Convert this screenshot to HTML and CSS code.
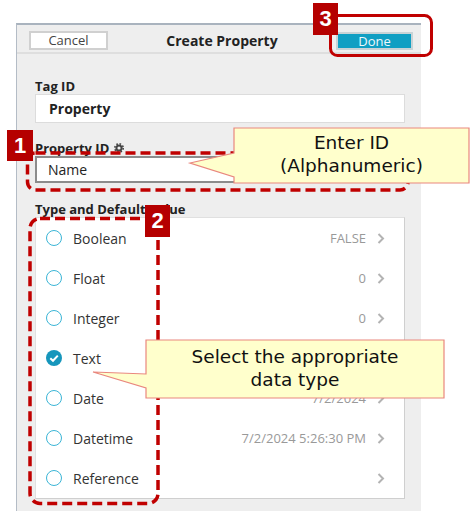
FILE: index.html
```html
<!DOCTYPE html>
<html>
<head>
<meta charset="utf-8">
<link rel="stylesheet" href="styles.css">
</head>
<body>
<div class="app">
  <header class="bar">
    <button class="btn cancel">Cancel</button>
    <div class="title">Create Property</div>
    <button class="btn done">Done</button>
  </header>
  <main class="form">
    <div class="field">
      <div class="label">Tag ID</div>
      <div class="input tag">Property</div>
    </div>
    <div class="field">
      <div class="label">Property ID
        <svg class="gear" width="10" height="10" viewBox="0 0 10 10"><circle cx="5" cy="5" r="2.6" fill="none" stroke="#444" stroke-width="2"/><circle cx="5" cy="5" r="4.2" fill="none" stroke="#444" stroke-width="1.6" stroke-dasharray="1.65 1.65"/></svg>
      </div>
      <div class="input focus">Name</div>
    </div>
    <div class="field types">
      <div class="label">Type and Default Value</div>
      <ul class="list">
        <li class="row"><span class="radio"></span><span class="name">Boolean</span><span class="val">FALSE</span><svg class="chev" width="8" height="11" viewBox="0 0 8 11"><polyline points="1.5,1 6,5.5 1.5,10" fill="none" stroke="#b3b3b3" stroke-width="2"/></svg></li>
        <li class="row"><span class="radio"></span><span class="name">Float</span><span class="val">0</span><svg class="chev" width="8" height="11" viewBox="0 0 8 11"><polyline points="1.5,1 6,5.5 1.5,10" fill="none" stroke="#b3b3b3" stroke-width="2"/></svg></li>
        <li class="row"><span class="radio"></span><span class="name">Integer</span><span class="val">0</span><svg class="chev" width="8" height="11" viewBox="0 0 8 11"><polyline points="1.5,1 6,5.5 1.5,10" fill="none" stroke="#b3b3b3" stroke-width="2"/></svg></li>
        <li class="row"><svg class="radio-on" width="16" height="16" viewBox="0 0 16 16"><circle cx="8" cy="8" r="8" fill="#1696bc"/><polyline points="4.3,8.2 7,10.8 11.8,5.6" fill="none" stroke="#fff" stroke-width="2"/></svg><span class="name">Text</span><span class="val"></span><svg class="chev" width="8" height="11" viewBox="0 0 8 11"><polyline points="1.5,1 6,5.5 1.5,10" fill="none" stroke="#b3b3b3" stroke-width="2"/></svg></li>
        <li class="row"><span class="radio"></span><span class="name">Date</span><span class="val">7/2/2024</span><svg class="chev" width="8" height="11" viewBox="0 0 8 11"><polyline points="1.5,1 6,5.5 1.5,10" fill="none" stroke="#b3b3b3" stroke-width="2"/></svg></li>
        <li class="row"><span class="radio"></span><span class="name">Datetime</span><span class="val">7/2/2024 5:26:30 PM</span><svg class="chev" width="8" height="11" viewBox="0 0 8 11"><polyline points="1.5,1 6,5.5 1.5,10" fill="none" stroke="#b3b3b3" stroke-width="2"/></svg></li>
        <li class="row"><span class="radio"></span><span class="name">Reference</span><span class="val"></span><svg class="chev" width="8" height="11" viewBox="0 0 8 11"><polyline points="1.5,1 6,5.5 1.5,10" fill="none" stroke="#b3b3b3" stroke-width="2"/></svg></li>
      </ul>
    </div>
  </main>
</div>

<svg class="overlay" width="472" height="511" viewBox="0 0 472 511">
  <rect x="330.5" y="15.5" width="101" height="40" rx="7" fill="none" stroke="#c00000" stroke-width="3"/>
  <rect x="27.5" y="153" width="380.5" height="37" rx="8" fill="none" stroke="#c00000" stroke-width="3.5" stroke-dasharray="10 5"/>
  <rect x="30" y="218.5" width="128" height="285" rx="10" fill="none" stroke="#c00000" stroke-width="3.5" stroke-dasharray="10 5"/>
  <path d="M234,128 H469 V183 H234 V177 L190,163 L234,153 Z" fill="#ffffcc" stroke="#e9877e" stroke-width="1.2"/>
  <path d="M146,340 H444 V398 H146 V388 L93,372 L146,374 Z" fill="#ffffcc" stroke="#e9877e" stroke-width="1.2"/>
</svg>
<div class="badge b1">1</div>
<div class="badge b2">2</div>
<div class="badge b3">3</div>
<div class="note n1">Enter ID<br>(Alphanumeric)</div>
<div class="note n2">Select the appropriate<br>data type</div>
</body>
</html>
```
FILE: styles.css
```css
html, body {
  margin: 0;
  padding: 0;
}
body {
  width: 472px;
  height: 511px;
  overflow: hidden;
  position: relative;
  background: #ffffff;
  font-family: "Open Sans", "Noto Sans", sans-serif;
}
.app {
  margin: 23px 0 0 16px;
  width: 404px;
  height: 486px;
  background: #eeeeee;
  border-top: 2px solid #a9b3be;
  border-left: 1px solid #b4bcc6;
}
.bar {
  height: 23px;
  padding: 4px 8px 0 12px;
  display: grid;
  grid-template-columns: auto 1fr auto;
  align-items: center;
  border-bottom: 2px solid #dedede;
}
.btn {
  height: 19px;
  padding: 0;
  font-family: "Open Sans", sans-serif;
  font-size: 13px;
  line-height: 15px;
  box-sizing: border-box;
}
.cancel {
  width: 79px;
  background: #ffffff;
  border: 2px solid #d0d0d0;
  color: #444;
}
.done {
  width: 77px;
  height: 18px;
  background: #109fc3;
  border: 2px solid #c9d3d6;
  color: #eef9fc;
}
.title {
  text-align: center;
  font-weight: 700;
  font-size: 14px;
  color: #222;
}
.form {
  padding: 24px 16px 0 18px;
  display: flex;
  flex-direction: column;
  gap: 17px;
}
.types {
  margin-top: 1px;
}
.label {
  font-weight: 700;
  font-size: 13px;
  line-height: 16px;
  color: #222;
  display: flex;
  align-items: center;
  gap: 5px;
}
.input {
  background: #fff;
  border: 1px solid #dcdcdc;
  height: 29px;
  box-sizing: border-box;
  padding-left: 13px;
  display: flex;
  align-items: center;
  font-size: 14px;
  color: #222;
}
.input.tag {
  font-weight: 700;
}
.input.focus {
  border: 2px solid #8c8c8c;
  height: 27px;
  padding-left: 11px;
}
.list {
  list-style: none;
  margin: 0;
  padding: 0;
  background: #fff;
  border: 1px solid #e0e0e0;
  border-right-color: #cfcfcf;
  border-bottom-color: #cfcfcf;
}
.row {
  height: 40px;
  display: flex;
  align-items: center;
  padding: 0 19px 0 10px;
}
.radio {
  width: 16px;
  height: 16px;
  box-sizing: border-box;
  border: 1.5px solid #3ab5d6;
  border-radius: 50%;
  margin-right: 11px;
}
.radio-on {
  margin-right: 11px;
}
.name {
  flex: 1;
  font-size: 14px;
  color: #333;
}
.val {
  font-size: 13px;
  color: #999;
  margin-right: 11px;
}
.overlay {
  position: absolute;
  left: 0;
  top: 0;
  pointer-events: none;
}
.badge {
  position: absolute;
  background: #b50000;
  color: #fff;
  font-family: "Liberation Sans", Arial, sans-serif;
  font-weight: 700;
  font-size: 22px;
  display: flex;
  align-items: center;
  justify-content: center;
}
.b1 { left: 7px; top: 130px; width: 26px; height: 31px; }
.b2 { left: 145px; top: 205px; width: 25px; height: 32px; }
.b3 { left: 313px; top: 3px; width: 25px; height: 32px; }
.note {
  position: absolute;
  font-family: "DejaVu Sans", sans-serif;
  font-size: 18.5px;
  line-height: 23px;
  text-align: center;
  color: #111;
}
.n1 { left: 234px; width: 235px; top: 131px; }
.n2 { left: 146px; width: 298px; top: 345px; }
```
